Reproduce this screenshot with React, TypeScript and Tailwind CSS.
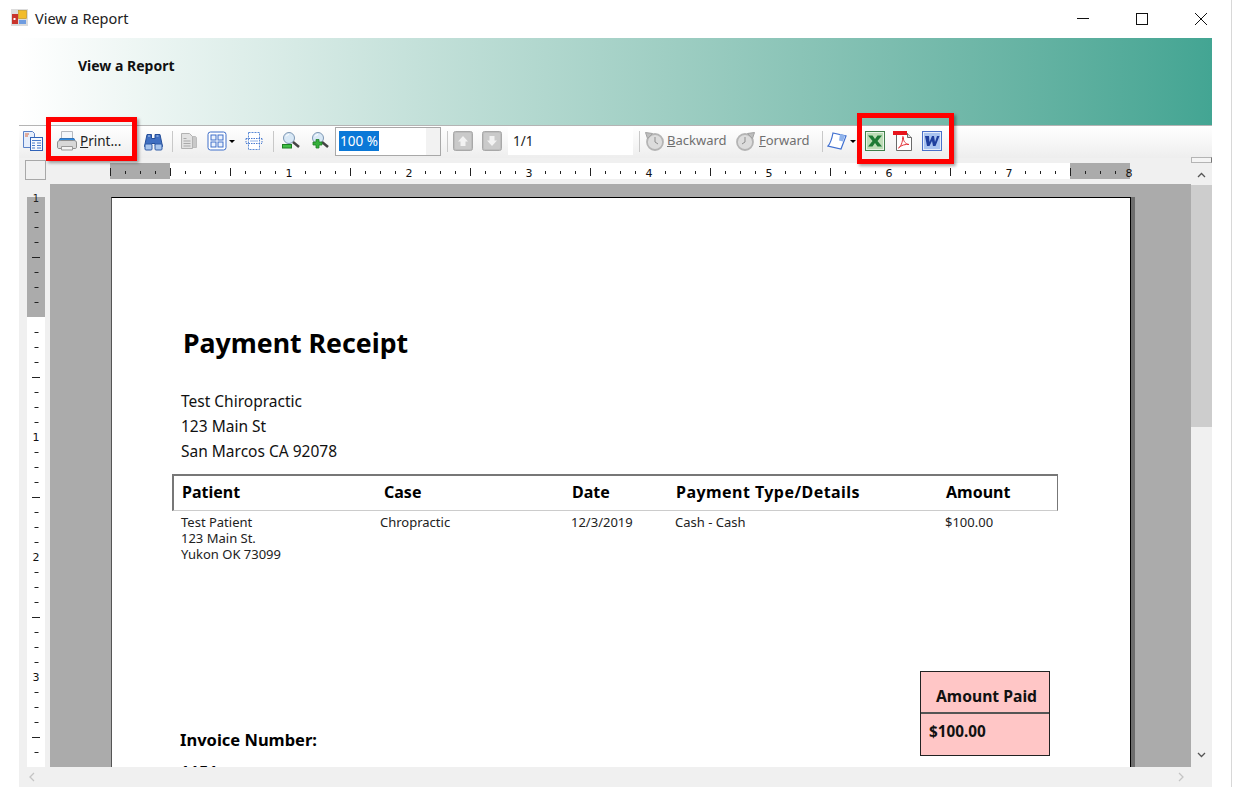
function HRuler() {
  const ticks: React.ReactNode[] = [];
  for (let i = 0; i <= 68; i++) {
    const x = 110 + i * 15;
    const rel = i - 4;
    if (rel % 8 === 0 && rel > 0) {
      ticks.push(
        <text key={i} x={x - 1} y={14} textAnchor="middle" fontSize="11" fill="#111" fontFamily="'DejaVu Sans',sans-serif">
          {rel / 8}
        </text>
      );
    } else if (rel % 4 === 0 || i === 0) {
      ticks.push(<rect key={i} x={x} y={5} width={1} height={8} fill="#222" />);
    } else {
      ticks.push(<rect key={i} x={x} y={8} width={1} height={3} fill="#222" />);
    }
  }
  return (
    <svg width="1172" height="16" viewBox="19 0 1172 16" className="block shrink-0">
      <rect x="110" y="0" width="1020" height="16" fill="#ffffff" />
      <rect x="110" y="0" width="60" height="16" fill="#ababab" />
      <rect x="1070" y="0" width="60" height="16" fill="#ababab" />
      {ticks}
    </svg>
  );
}

function VRuler() {
  const ticks: React.ReactNode[] = [];
  for (let i = 0; i <= 38; i++) {
    const y = i * 15;
    const rel = i - 8;
    if (i === 0) {
      ticks.push(<text key={i} x="9" y="5" textAnchor="middle" fontSize="10" fill="#222" fontFamily="'DejaVu Sans',sans-serif">1</text>);
    } else if (rel === 0) {
      continue;
    } else if (rel % 8 === 0) {
      ticks.push(<text key={i} x="9" y={y + 4} textAnchor="middle" fontSize="11" fill="#111" fontFamily="'DejaVu Sans',sans-serif">{rel / 8}</text>);
    } else if (rel % 4 === 0) {
      ticks.push(<rect key={i} x="5" y={y} width="8" height="1" fill="#222" />);
    } else {
      ticks.push(<rect key={i} x="7.5" y={y} width="4" height="1" fill="#222" />);
    }
  }
  return (
    <svg width="18" height="570" viewBox="0 0 18 570" className="block overflow-visible">
      <rect x="0" y="0" width="18" height="570" fill="#ffffff" />
      <rect x="0" y="0" width="18" height="120" fill="#ababab" />
      {ticks}
    </svg>
  );
}

function Sep() {
  return <div className="w-px h-[21px] bg-[#c8c8c8] shrink-0" />;
}

function CopyIcon() {
  return (
    <svg width="22" height="22" viewBox="0 0 22 22">
      <path d="M1.500 1.500h9l2 2v14h-11z" fill="#e6eefb" stroke="#5b82c8" />
      <path d="M3 4h4M3 6h3" stroke="#d9683f" />
      <rect x="8.500" y="7.500" width="12" height="13" fill="#f4f8fe" stroke="#2f62b8" />
      <path d="M10 10.500h9M10 13h3M15 13h4M10 15.500h3M15 15.500h4M10 18h3M15 18h4" stroke="#4a7bc8" />
    </svg>
  );
}

function PrintIcon() {
  return (
    <svg width="24" height="24" viewBox="0 0 24 24">
      <path d="M6.500 2.500h11v9h-11z" fill="#f3f6fa" stroke="#b4b8bf" />
      <path d="M5 9.500h14l1 3H4z" fill="#2f8be0" stroke="#3474b8" />
      <path d="M2.500 14c0-2 1-2.500 3-2.500h13c2 0 3 .5 3 2.500v4c0 1-.5 1.500-1.500 1.500H4c-1 0-1.500-.5-1.500-1.500z" fill="#d8d8d8" stroke="#8f8f8f" />
      <path d="M6.500 17.500h11v3.500h-11z" fill="#f4f4f4" stroke="#9a9a9a" />
    </svg>
  );
}

function BinocularsIcon() {
  return (
    <svg width="21" height="21" viewBox="0 0 21 21">
      <path d="M4 3.500h4.500v4h3.500v-4h5l2.500 12h-7l-.5-3h-3.500l-.5 3H1.500z" fill="#3f6fc2" stroke="#254e99" />
      <rect x="2" y="13" width="7" height="6" rx="1" fill="#a9c6ee" stroke="#2f5ba6" />
      <rect x="12" y="13" width="7" height="6" rx="1" fill="#a9c6ee" stroke="#2f5ba6" />
      <path d="M5 5h2M13.500 5h2" stroke="#b8d0f2" />
    </svg>
  );
}

function PagesIcon() {
  return (
    <svg width="18" height="18" viewBox="0 0 18 18">
      <path d="M12 4.500h3.500l1 1v10h-4.500z" fill="#c9c9c9" stroke="#bdbdbd" />
      <path d="M1.500 1.500h8l3 3v12h-11z" fill="#e2e2e2" stroke="#b2b2b2" />
      <path d="M3.500 6.500h3M3.500 9h7M3.500 11.500h7M3.500 14h7" stroke="#a9a9a9" />
    </svg>
  );
}

function GridIcon() {
  return (
    <svg width="20" height="20" viewBox="0 0 20 20">
      <rect x="1" y="1" width="18" height="18" rx="2.500" fill="#fff" stroke="#3f6fc9" />
      <rect x="4" y="4" width="5" height="5" fill="#eaf1fc" stroke="#3f6fc9" />
      <rect x="11" y="4" width="5" height="5" fill="#eaf1fc" stroke="#3f6fc9" />
      <rect x="4" y="11" width="5" height="5" fill="#eaf1fc" stroke="#3f6fc9" />
      <rect x="11" y="11" width="5" height="5" fill="#eaf1fc" stroke="#3f6fc9" />
    </svg>
  );
}

function Caret() {
  return <div className="w-0 h-0 border-x-[3px] border-x-transparent border-t-[3px] border-t-black" />;
}

function PageWidthIcon() {
  return (
    <svg width="18" height="20" viewBox="0 0 18 20">
      <path d="M3.500 1.500h11v17h-11z" fill="#fff" stroke="#5a8ad6" strokeDasharray="2 1" />
      <path d="M1 7.500h16M1 12.500h16M1 7.500v5M17 7.500v5" stroke="#4a7bd0" strokeDasharray="1.500 1" fill="none" />
      <path d="M5 10h8" stroke="#8fb0e4" />
    </svg>
  );
}

function ZoomIcon({ plus }: { plus?: boolean }) {
  return (
    <svg width="20" height="20" viewBox="0 0 20 20">
      <circle cx="8" cy="7" r="5.500" fill="#d8e8f6" stroke="#7d97b3" />
      <path d="M5 5.500a3.500 3.500 0 0 1 3-2" stroke="#fff" fill="none" />
      <path d="M12 11l6 5" stroke="#444" strokeWidth="2.500" />
      {plus ? (
        <path d="M3 11h3V8.500h3V11h3v3H9v3H6v-3H3z" fill="#35b03a" stroke="#1d7f23" strokeWidth=".8" />
      ) : (
        <rect x="1.500" y="13.500" width="9" height="3.500" fill="#3fbd45" stroke="#1d7f23" />
      )}
    </svg>
  );
}

function ArrowButton({ down }: { down?: boolean }) {
  return (
    <svg width="20" height="20" viewBox="0 0 20 20">
      <rect x=".5" y=".5" width="19" height="19" rx="2" fill="#bdbdbd" stroke="#a8a8a8" />
      <rect x="2" y="2" width="16" height="16" rx="1" fill="#cacaca" />
      {down ? (
        <path d="M7.500 5h5v4.500H15L10 15 5 9.500h2.500z" fill="#f2f2f2" />
      ) : (
        <path d="M7.500 15h5v-4.500H15L10 5 5 10.500h2.500z" fill="#f2f2f2" />
      )}
    </svg>
  );
}

function ClockIcon({ forward }: { forward?: boolean }) {
  return (
    <svg width="20" height="20" viewBox="0 0 20 20" className={forward ? "-scale-x-100" : ""}>
      <circle cx="11" cy="11" r="8" fill="#dcdcdc" stroke="#b4b4b4" strokeWidth="1.800" />
      <path d="M11 6v5l3 2" stroke="#8d8d8d" fill="none" />
      <path d="M1.500 1.500l7 1-5 5z" fill="#bdbdbd" stroke="#a2a2a2" />
    </svg>
  );
}

function EditIcon() {
  return (
    <svg width="20" height="20" viewBox="0 0 20 20">
      <path d="M6 2l13 3-5 13-13-3c2-2 4-8 5-13z" fill="#fff" stroke="#3f6fd0" strokeWidth="1.200" />
      <path d="M13 3l5 1.500-2 6-4-1z" fill="#8fb3ec" />
    </svg>
  );
}

function ExcelIcon() {
  return (
    <svg width="20" height="20" viewBox="0 0 20 20">
      <rect x=".5" y=".5" width="19" height="19" fill="#e8f3e6" stroke="#3f7f4a" />
      <rect x="2" y="2" width="16" height="16" fill="#bcdcb6" />
      <path d="M3 4.500h4.500L10 8l2.500-3.500H17l-4.500 5.500 4.500 5.500h-4.500L10 12l-2.500 3.500H3L7.500 10z" fill="#1d7a34" />
    </svg>
  );
}

function PdfIcon() {
  return (
    <svg width="22" height="22" viewBox="0 0 22 22">
      <path d="M4.500 3.500h11l4 4v13h-15z" fill="#fff" stroke="#6a6a6a" />
      <path d="M15.500 3.500v4h4" fill="#ddd" stroke="#6a6a6a" />
      <rect x="1" y="1" width="14" height="4" fill="#e8141c" />
      <path d="M6.500 18c2-1 4.500-6 4-10.500-.3-1.500 1.300-1.500 1 .5-.4 3 2 6 5.500 6.500-3-.5-8 .5-10.500 3.500z" fill="none" stroke="#e4343a" />
    </svg>
  );
}

function WordIcon() {
  return (
    <svg width="20" height="20" viewBox="0 0 20 20">
      <rect x=".5" y=".5" width="19" height="19" fill="#e6edfb" stroke="#4a70c8" />
      <rect x="2" y="2" width="16" height="16" fill="#a9c3f0" />
      <path d="M3 5h4l.5 6 2.500-6h2l1 6 2-6h2.500l-4 10h-2.500l-1-5-2.500 5H5z" fill="#1f3f9e" />
    </svg>
  );
}

export default function App() {
  return (
    <div className="relative w-[1233px] h-[787px] overflow-hidden bg-white font-['Noto_Sans',sans-serif] text-[#111]">
      <div className="h-[38px] flex items-center pl-[11px]">
        <svg width="18" height="18" viewBox="0 0 18 18" className="shrink-0 mb-[3px]">
          <rect x="0" y="0" width="17" height="17" fill="#dcdcdc" />
          <rect x="1" y="5" width="6" height="10" fill="#c9342c" />
          <rect x="2.500" y="9" width="2" height="2" fill="#fff" />
          <rect x="7.500" y="1.500" width="8" height="8" fill="#f2bc2a" stroke="#c08f12" strokeWidth=".6" />
          <rect x="8" y="11" width="7" height="4" fill="#6f9ce0" />
        </svg>
        <span className="ml-[6px] mb-[2px] text-[14.500px] leading-none font-['Open_Sans',sans-serif] text-[#222]">View a Report</span>
        <div className="ml-auto flex items-center text-black">
          <svg width="60" height="38" viewBox="0 0 60 38"><path d="M23 18.500h12" stroke="#111" /></svg>
          <svg width="58" height="38" viewBox="0 0 58 38"><rect x="22.500" y="13.500" width="11" height="11" fill="none" stroke="#111" /></svg>
          <svg width="59" height="38" viewBox="0 0 59 38" className="mr-[2px]"><path d="M23 13l12 12M35 13L23 25" stroke="#111" /></svg>
        </div>
      </div>

      <div className="ml-[19px] w-[1193px] flex flex-col">
        <div className="h-[87px] pl-[59px] pt-[19px] bg-gradient-to-r from-white to-[#43a593]">
          <span className="block text-[14px] leading-[17px] font-bold">View a Report</span>
        </div>

        <div className="h-[33px] flex items-center pb-[2px] border-t border-[#b4b4b4] bg-gradient-to-b from-white to-[#eeeeee] text-[13px] text-[#222] whitespace-nowrap">
          <div className="ml-[3px] w-[22px] shrink-0"><CopyIcon /></div>
          <div className="ml-[11px] shrink-0"><PrintIcon /></div>
          <span className="ml-px w-[48px] shrink-0 text-[13.500px]"><span className="underline">P</span>rint...</span>
          <div className="ml-[15px] shrink-0"><BinocularsIcon /></div>
          <div className="ml-[8px] shrink-0"><Sep /></div>
          <div className="ml-[7px] shrink-0"><PagesIcon /></div>
          <div className="ml-[9px] shrink-0"><GridIcon /></div>
          <div className="ml-[2px] shrink-0"><Caret /></div>
          <div className="ml-[10px] shrink-0"><PageWidthIcon /></div>
          <div className="ml-[10px] shrink-0"><Sep /></div>
          <div className="ml-[7px] shrink-0"><ZoomIcon /></div>
          <div className="ml-[9px] shrink-0"><ZoomIcon plus /></div>
          <div className="ml-[5px] w-[106px] h-[29px] shrink-0 flex items-center border border-[#a8a8a8] bg-[#f2f2f2] overflow-hidden">
            <div className="w-[90px] h-full bg-white pl-[3px] flex items-center">
              <span className="bg-[#0a78d7] text-white h-[20px] leading-[20px] px-px text-[13.500px]">100 %</span>
            </div>
          </div>
          <div className="ml-[6px] shrink-0"><Sep /></div>
          <div className="ml-[5px] shrink-0"><ArrowButton /></div>
          <div className="ml-[9px] shrink-0"><ArrowButton down /></div>
          <div className="ml-[6px] w-[125px] h-[28px] shrink-0 flex items-center bg-white pl-[5px] text-[13.500px]">1/1</div>
          <div className="ml-[6px] shrink-0"><Sep /></div>
          <div className="ml-[4px] shrink-0"><ClockIcon /></div>
          <span className="ml-[3px] w-[59px] shrink-0 text-[#6f6f6f]"><span className="underline">B</span>ackward</span>
          <div className="ml-[10px] shrink-0"><ClockIcon forward /></div>
          <span className="ml-[3px] w-[51px] shrink-0 text-[#6f6f6f]"><span className="underline">F</span>orward</span>
          <div className="ml-[12px] shrink-0"><Sep /></div>
          <div className="ml-[4px] shrink-0"><EditIcon /></div>
          <div className="ml-[3px] shrink-0"><Caret /></div>
          <div className="ml-[9px] shrink-0"><ExcelIcon /></div>
          <div className="ml-[7px] shrink-0"><PdfIcon /></div>
          <div className="ml-[8px] shrink-0"><WordIcon /></div>
        </div>

        <div className="relative h-[26px] pt-[5px] bg-[#f0f0f0] flex items-start">
          <HRuler />
          <svg width="21" height="16" viewBox="0 0 21 16" className="shrink-0"><path d="M7 14l3.500-3.500L14 14" fill="none" stroke="#555" strokeWidth="1.300" /></svg>
          <div className="absolute left-[6px] top-[2px] w-[21px] h-[20px] border border-[#a8a8a8] bg-[#f0f0f0]" />
        </div>

        <div className="h-[583px] flex">
          <div className="w-[31px] shrink-0 bg-[#f0f0f0] pl-[8px] pt-[13px] overflow-hidden">
            <VRuler />
          </div>
          <div className="flex-1 min-w-0 bg-[#ababab] pl-[61px] pt-[13px] overflow-hidden">
            <div className="w-[1020px] h-[800px] bg-white border-l border-t border-r border-t-black border-l-[#555] border-r-black shadow-[4px_0_0_#6e6e6e] pt-[128px]">
              <h1 className="ml-[71px] text-[26.700px] leading-[34px] font-bold text-black">Payment Receipt</h1>
              <div className="ml-[69px] mt-[29px] text-[15.500px] leading-[25px]">
                <p>Test Chiropractic</p>
                <p>123 Main St</p>
                <p>San Marcos CA 92078</p>
              </div>
              <div className="ml-[60px] mt-[10px] w-[886px] h-[37px] flex items-center pb-[2px] border-t-2 border-l-2 border-r border-b border-t-[#777] border-l-[#777] border-r-[#777] border-b-[#ccc] text-[16px] font-bold text-black">
                <span className="w-[202px] pl-[8px]">Patient</span>
                <span className="w-[188px] pl-[8px]">Case</span>
                <span className="w-[104px] pl-[8px]">Date</span>
                <span className="w-[270px] pl-[8px] tracking-[0.45px]">Payment Type/Details</span>
                <span className="pl-[8px]">Amount</span>
              </div>
              <div className="ml-[69px] mt-[3px] flex text-[13px] leading-[16px] text-[#222]">
                <div className="w-[199px]">
                  <p>Test Patient</p>
                  <p>123 Main St.</p>
                  <p>Yukon OK 73099</p>
                </div>
                <div className="w-[191px]">Chropractic</div>
                <div className="w-[104px]">12/3/2019</div>
                <div className="w-[270px]">Cash - Cash</div>
                <div>$100.00</div>
              </div>
              <div className="flex mt-[109px] pl-[68px]">
                <div className="w-[740px] pt-[59px]">
                  <p className="text-[16.500px] leading-[20px] font-bold text-black">Invoice Number:</p>
                  <p className="mt-[12px] text-[16.500px] leading-[20px] font-bold text-black">1151</p>
                </div>
                <div className="w-[130px] h-[85px] border border-[#222] bg-[#ffc6c6] font-['Liberation_Sans',sans-serif] font-bold text-[15.700px] text-[#111]">
                  <div className="h-[42px] pl-[15px] pt-[14px] leading-[20px] border-b-2 border-[#555]">Amount Paid</div>
                  <div className="pl-[8px] pt-[7px] leading-[20px] text-[15.300px]">$100.00</div>
                </div>
              </div>
            </div>
          </div>
          <div className="w-[21px] shrink-0 bg-[#f0f0f0] flex flex-col items-center">
            <div className="mt-px h-[242px] w-full bg-[#cdcdcd] shrink-0" />
            <div className="flex-1" />
            <svg width="21" height="16" viewBox="0 0 21 16" className="shrink-0 mb-[4px]"><path d="M7 6l3.500 3.500L14 6" fill="none" stroke="#555" strokeWidth="1.300" /></svg>
          </div>
        </div>

        <div className="h-[20px] bg-[#f0f0f0] flex items-center justify-between pl-[9px] pr-[27px]">
          <svg width="8" height="10" viewBox="0 0 8 10"><path d="M6 1L2 5l4 4" fill="none" stroke="#c4c4c4" strokeWidth="1.300" /></svg>
          <svg width="8" height="10" viewBox="0 0 8 10"><path d="M2 1l4 4-4 4" fill="none" stroke="#c4c4c4" strokeWidth="1.300" /></svg>
        </div>
      </div>

      <div className="absolute left-[46px] top-[117px] w-[91px] h-[44px] border-[5px] border-[#f00] shadow-[2px_2px_3px_rgba(0,0,0,0.35)]" />
      <div className="absolute left-[857px] top-[113px] w-[97px] h-[51px] border-[5px] border-[#f00] shadow-[2px_2px_3px_rgba(0,0,0,0.35)]" />
      <div className="absolute left-[1191px] top-[157px] w-[21px] h-[6px] border border-[#b4b4b4] border-r-[#777] bg-[#f4f4f4]" />
      <div className="absolute right-[1px] top-0 w-px h-full bg-[#d8d8d8]" />
    </div>
  );
}
